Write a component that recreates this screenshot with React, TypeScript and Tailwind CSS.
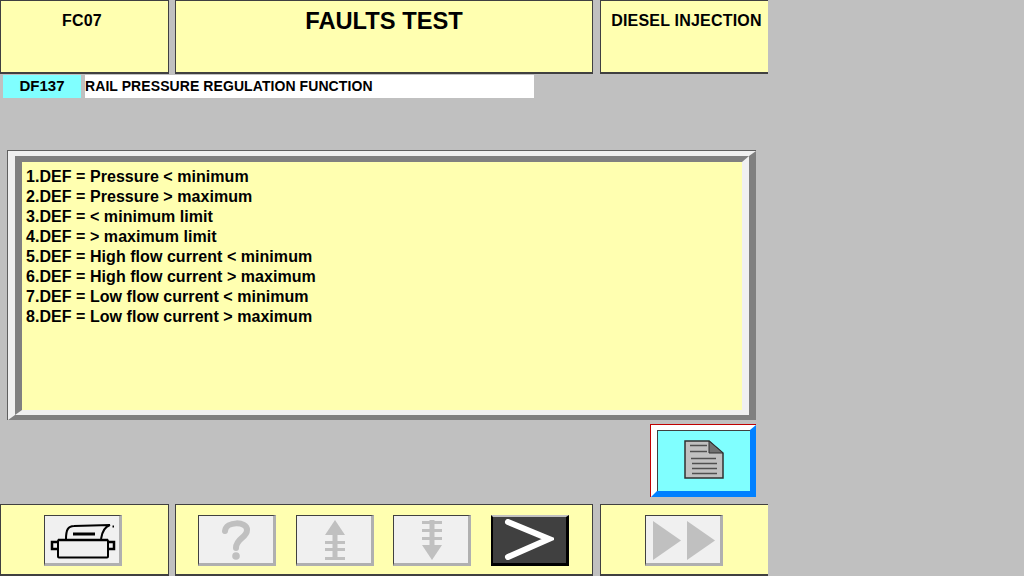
const lines = [
  '1.DEF = Pressure < minimum',
  '2.DEF = Pressure > maximum',
  '3.DEF = < minimum limit',
  '4.DEF = > maximum limit',
  '5.DEF = High flow current < minimum',
  '6.DEF = High flow current > maximum',
  '7.DEF = Low flow current < minimum',
  '8.DEF = Low flow current > maximum',
];

function Panel({ className, children }: { className: string; children?: React.ReactNode }) {
  return (
    <div className={`h-full bg-[#ffffb0] border border-[#404040] border-b-2 ${className}`}>
      {children}
    </div>
  );
}

function ToolButton({ children, dark }: { children: React.ReactNode; dark?: boolean }) {
  return (
    <div
      className={
        dark
          ? 'w-[78px] h-[51px] flex items-center justify-center bg-[#404040] border-t-2 border-l-2 border-t-[#c0c0c0] border-l-[#000000] border-r-[3px] border-b-[3px] border-r-[#000000] border-b-[#000000]'
          : 'w-[78px] h-[51px] flex items-center justify-center bg-[#f0f0f0] border-t border-l border-t-[#404040] border-l-[#404040] border-r-[3px] border-b-[3px] border-r-[#b0b0b0] border-b-[#b0b0b0]'
      }
    >
      {children}
    </div>
  );
}

// drawn in page coordinates of the reference, hence the viewBox offset
function PrinterIcon() {
  return (
    <svg width="68" height="41" viewBox="48 518 68 41" fill="none" stroke="#000" strokeWidth="2">
      <path d="M66 538 C66 529 68 525 74 525 L110 524 C104 526 102 531 101 538" />
      <path d="M73 533 H95" strokeWidth="3" />
      <path d="M58 539 H108" strokeWidth="2.5" />
      <rect x="58" y="539" width="50" height="17.5" rx="1" />
      <path d="M58 541 H52 V548 H58 M108 541 H114 V548 H108" strokeWidth="2.5" />
      <rect x="112.5" y="524.5" width="1.5" height="2" fill="#000" stroke="none" />
    </svg>
  );
}

function QuestionIcon() {
  return (
    <svg width="30" height="40" viewBox="0 0 30 40" fill="none">
      <path d="M4 11 C5 1 26 1 26 10 C26 18 15 18 15 28" stroke="#c0c0c0" strokeWidth="6" strokeLinecap="round" />
      <circle cx="15" cy="36" r="3.8" fill="#c0c0c0" />
    </svg>
  );
}

function UpIcon() {
  return (
    <svg width="22" height="40" viewBox="0 0 22 40" fill="#c0c0c0" className="ml-[2px]">
      <path d="M11 0 L21 15 H1 Z" />
      <rect x="8.5" y="14" width="5" height="26" />
      <rect x="1" y="21" width="20" height="3" />
      <rect x="1" y="28" width="20" height="3" />
      <rect x="1" y="37" width="20" height="3" />
    </svg>
  );
}

function DownIcon() {
  return (
    <svg width="22" height="40" viewBox="0 0 22 40" fill="#c0c0c0" className="ml-[2px]">
      <path d="M11 40 L21 25 H1 Z" />
      <rect x="8.5" y="0" width="5" height="26" />
      <rect x="1" y="1" width="20" height="3" />
      <rect x="1" y="9" width="20" height="3" />
      <rect x="1" y="17" width="20" height="3" />
    </svg>
  );
}

function NextIcon() {
  return (
    <svg width="50" height="42" viewBox="0 0 50 42" fill="none">
      <path d="M4 3 L45 20 L4 38" stroke="#fff" strokeWidth="6" strokeLinecap="round" strokeLinejoin="miter" />
    </svg>
  );
}

function FastForwardIcon() {
  return (
    <svg width="62" height="39" viewBox="0 0 62 39" fill="#c0c0c0" className="ml-[2px] mt-[2px]">
      <path d="M0 0 L28 19.5 L0 39 Z" />
      <path d="M34 0 L62 19.5 L34 39 Z" />
    </svg>
  );
}

function DocIcon() {
  return (
    <svg width="40" height="40" viewBox="0 0 40 40" className="mb-[3px]">
      <path d="M1 1 H25 L39 13 V38 H1 Z" fill="#c0c0c0" stroke="#303030" strokeWidth="1.5" />
      <path d="M25 1 L39 13 H25 Z" fill="#707070" stroke="#303030" strokeWidth="1" />
      <g stroke="#505050" strokeWidth="1.5">
        <path d="M6 5.5 H23 M6 11.5 H23 M7 18.5 H32 M8 23.5 H33 M8 28.5 H33 M8 33.5 H33" />
      </g>
    </svg>
  );
}

export default function App() {
  return (
    <div
      className="w-[1024px] h-[576px] bg-[#c0c0c0] overflow-hidden"
      style={{ fontFamily: '"Liberation Sans", Arial, sans-serif' }}
    >
      <div className="w-[768px] h-full flex flex-col text-black font-bold">
        <div className="h-[74px] flex gap-[6px]">
          <Panel className="w-[169px] pt-[10px] pr-[5px] text-center text-[16px] leading-5 tracking-[0.2px]">FC07</Panel>
          <Panel className="w-[419px] pt-[8px] text-center text-[23.7px] leading-6">FAULTS TEST</Panel>
          <Panel className="w-[168px] ml-[1px] pt-[10px] pl-[10px] text-[16px] leading-5 tracking-[0.2px] whitespace-nowrap border-r-0">DIESEL INJECTION</Panel>
        </div>
        <div className="h-[23px] flex mt-[1px] ml-[3px] gap-1 text-[14px] leading-[22px]">
          <div className="w-[78px] bg-[#80ffff] text-center text-[15px]">DF137</div>
          <div className="w-[449px] bg-white tracking-[0.08px]">RAIL PRESSURE REGULATION FUNCTION</div>
        </div>
        <div className="mt-[52px] ml-[7px] w-[749px] h-[270px] border-t border-l border-[#606060]">
          <div className="h-full border-[7px] border-t-[5px] border-t-[#f0f0f0] border-l-[#f0f0f0] border-r-[#808080] border-b-[#808080] border-b-[5px]">
            <div className="h-full border-[7px] border-t-[6px] border-t-[#808080] border-l-[#808080] border-r-[#f0f0f0] border-b-[#f0f0f0] border-b-[5px] bg-[#ffffb0] pl-[4px] pt-[5px] text-[16px] leading-5 tracking-[0.05px]">
              {lines.map((line) => (
                <div key={line}>{line}</div>
              ))}
            </div>
          </div>
        </div>
        <div className="mt-[4px] ml-[650px] w-[106px] h-[73px] border-t border-l border-[#c00000]">
          <div className="h-full border-[6px] border-t-white border-l-white border-r-[#0080ff] border-b-[#0080ff] border-t-[5px]">
            <div className="h-full bg-[#80ffff] border-t border-l border-[#404040] flex items-center justify-center">
              <DocIcon />
            </div>
          </div>
        </div>
        <div className="mt-auto h-[72px] flex gap-[6px]">
          <Panel className="w-[169px] border-b-0 pt-[10px] pl-[43px]">
            <ToolButton><PrinterIcon /></ToolButton>
          </Panel>
          <Panel className="w-[419px] border-b-0 pt-[10px] pl-[22px] flex gap-5 items-start">
            <ToolButton><QuestionIcon /></ToolButton>
            <ToolButton><UpIcon /></ToolButton>
            <div className="-ml-px">
              <ToolButton><DownIcon /></ToolButton>
            </div>
            <ToolButton dark><NextIcon /></ToolButton>
          </Panel>
          <Panel className="w-[168px] ml-[1px] border-b-0 border-r-0 pt-[10px] pl-[44px]">
            <ToolButton><FastForwardIcon /></ToolButton>
          </Panel>
        </div>
      </div>
    </div>
  );
}
